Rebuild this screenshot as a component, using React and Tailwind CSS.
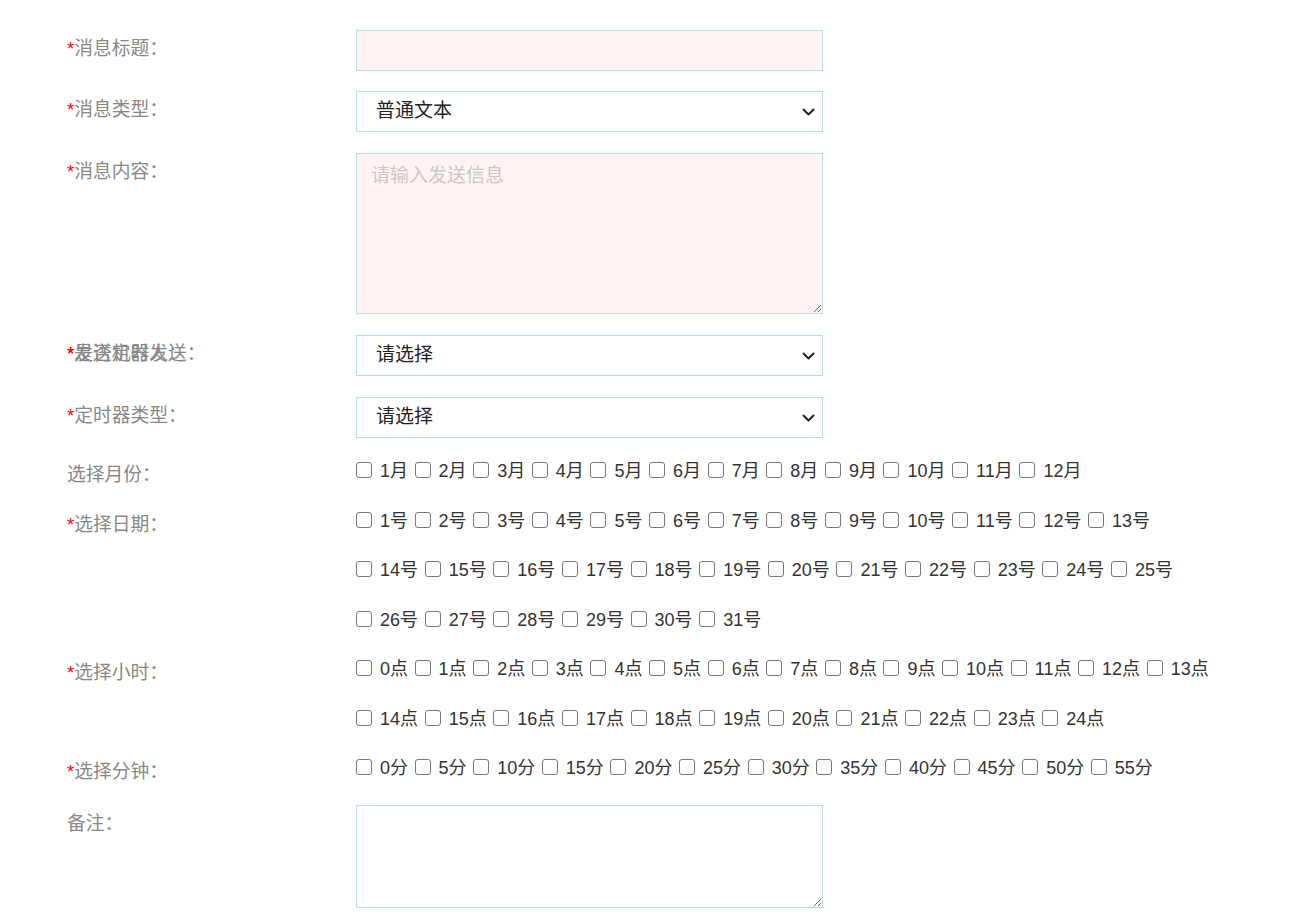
import React from 'react';

const range = (a, b, step = 1) => {
  const out = [];
  for (let i = a; i <= b; i += step) out.push(i);
  return out;
};

const Label = ({ req, text, check }) => (
  <div
    className={`w-[289px] shrink-0 text-[18.75px] text-[#888] ${
      check ? 'pt-[8px] leading-[18px]' : 'pt-[9px] leading-[20px]'
    }`}
  >
    {req && <span className="text-[#f00]">*</span>}
    {text}
  </div>
);

const Chevron = () => (
  <svg
    className="pointer-events-none absolute right-[8px] top-1/2 -translate-y-1/2"
    width="13"
    height="8"
    viewBox="0 0 13 8"
    fill="none"
  >
    <path d="M1.5 1.5l5 5 5-5" stroke="#222" strokeWidth="2" strokeLinecap="round" strokeLinejoin="round" />
  </svg>
);

const Select = ({ value }) => (
  <div className="relative w-[467px]">
    <select
      defaultValue={value}
      className="block h-[41px] w-full appearance-none border border-[#b6dde2] bg-white pl-[19px] text-[19px] text-[#222] outline-none"
    >
      <option>{value}</option>
    </select>
    <Chevron />
  </div>
);

const CheckLine = ({ items }) => (
  <div className="flex h-[26px] items-center">
    {items.map((t) => (
      <label key={t} className="mr-[6.6px] flex items-center text-[18px] text-[#333]">
        <input
          type="checkbox"
          className="block h-[16px] w-[16px] shrink-0 -translate-y-[1px] appearance-none rounded-[3px] border border-[#777] bg-white"
        />
        <span className="ml-[8px] leading-[26px]">{t}</span>
      </label>
    ))}
  </div>
);

const CheckRow = ({ req, text, lines, last }) => (
  <div className={`flex ${last ? 'mb-[24px]' : 'mb-[23.5px]'}`}>
    <Label check req={req} text={text} />
    <div className="flex flex-col gap-y-[23.5px]">
      {lines.map((l, i) => (
        <CheckLine key={i} items={l} />
      ))}
    </div>
  </div>
);

export default function App() {
  const months = range(1, 12).map((n) => `${n}月`);
  const days = range(1, 31).map((n) => `${n}号`);
  const hours = range(0, 24).map((n) => `${n}点`);
  const mins = range(0, 55, 5).map((n) => `${n}分`);

  return (
    <div className="min-h-screen bg-white pl-[67px] pt-[30px] font-['Liberation_Sans','Noto_Sans_CJK_SC',sans-serif]">
      {/* 消息标题 */}
      <div className="mb-[20px] flex">
        <Label req text="消息标题：" />
        <input className="h-[41px] w-[467px] border border-[#b6dde2] bg-[#fff3f3] px-[14px] text-[19px] outline-none" />
      </div>

      {/* 消息类型 */}
      <div className="mb-[21px] flex">
        <Label req text="消息类型：" />
        <Select value="普通文本" />
      </div>

      {/* 消息内容 */}
      <div className="mb-[21px] flex">
        <Label req text="消息内容：" />
        <textarea
          placeholder="请输入发送信息"
          className="block h-[161px] w-[467px] border border-[#b6dde2] bg-[#fff3f3] px-[14px] pt-[8px] text-[19px] leading-[27px] outline-none placeholder:text-[#c8c8c8]"
        />
      </div>

      {/* 发送机器人 / 是否定时发送 (labels overlap in the original) */}
      <div className="mb-[21px] flex">
        <div className="relative w-[289px] shrink-0">
          <Label req text="发送机器人：" />
          <div className="absolute left-0 top-0">
            <Label req text="是否定时发送：" />
          </div>
        </div>
        <Select value="请选择" />
      </div>

      {/* 定时器类型 */}
      <div className="mb-[20px] flex">
        <Label req text="定时器类型：" />
        <Select value="请选择" />
      </div>

      <CheckRow text="选择月份：" lines={[months]} />
      <CheckRow req text="选择日期：" lines={[days.slice(0, 13), days.slice(13, 25), days.slice(25)]} />
      <CheckRow req text="选择小时：" lines={[hours.slice(0, 14), hours.slice(14)]} />
      <CheckRow req last text="选择分钟：" lines={[mins]} />

      {/* 备注 */}
      <div className="flex pb-[7px]">
        <Label text="备注：" />
        <textarea className="block h-[103px] w-[467px] border border-[#b6dde2] bg-white px-[14px] text-[19px] outline-none" />
      </div>
    </div>
  );
}
